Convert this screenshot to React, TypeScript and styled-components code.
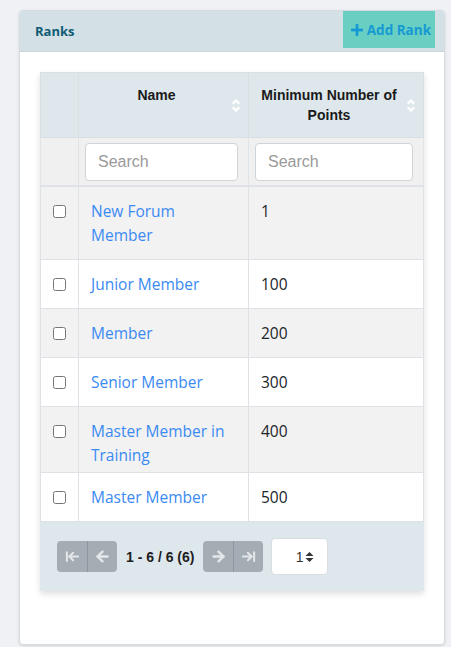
import React from "react";
import styled, { createGlobalStyle } from "styled-components";
import { ArrowLeft, ArrowRight, ArrowLeftToLine, ArrowRightToLine } from "lucide-react";

const GlobalStyle = createGlobalStyle`
  html, body { margin: 0; padding: 0; }
  body {
    background: #eff1f4;
    font-family: "Open Sans", "Noto Sans", sans-serif;
    color: #212529;
  }
  * { box-sizing: border-box; }
`;

const Page = styled.div`
  padding: 10px 6px 4px 19px;
`;

const Card = styled.section`
  width: 426px;
  background: #fff;
  border: 1px solid #d6dce0;
  border-radius: 4px;
  box-shadow: 0 1px 3px rgba(0, 0, 0, 0.12);
  overflow: hidden;
`;

const CardHeader = styled.header`
  display: flex;
  justify-content: space-between;
  align-items: flex-start;
  height: 41px;
  padding: 0 9px 0 15px;
  background: #d3e0e6;
  border-bottom: 1px solid #c9d5db;
`;

const Title = styled.h2`
  margin: 0;
  line-height: 40px;
  font-family: "Open Sans", sans-serif;
  font-size: 13px;
  font-weight: 700;
  color: #0f5c73;
`;

const AddButton = styled.button`
  display: flex;
  align-items: center;
  gap: 4px;
  height: 37px;
  padding: 0 4px 0 8px;
  border: none;
  background: #68cfc2;
  color: #1799d3;
  font-family: "Open Sans", sans-serif;
  font-size: 13.5px;
  font-weight: 700;
  cursor: pointer;
`;

const CardBody = styled.div`
  padding: 20px 20px 53px 20px;
`;

const TableWrap = styled.div`
  box-shadow: 0 3px 6px rgba(0, 0, 0, 0.13);
`;

const Table = styled.table`
  width: 100%;
  border-collapse: collapse;
  table-layout: fixed;
`;

const HeadRow = styled.tr`
  background: #dde7ec;
`;

const Th = styled.th<{ $w?: number }>`
  position: relative;
  width: ${(p) => (p.$w ? `${p.$w}px` : "auto")};
  padding: 12px 26px 12px 12px;
  border: 1px solid #d9e0e4;
  font-family: "Liberation Sans", Arial, sans-serif;
  font-size: 14px;
  font-weight: 700;
  line-height: 20px;
  color: #1a1a1a;
  text-align: center;
  vertical-align: top;
`;

const CornerTh = styled(Th)`
  padding: 0;
`;

const SortIcon = styled.svg`
  position: absolute;
  right: 7px;
  top: 50%;
  margin-top: -7px;
`;

const FilterRow = styled.tr`
  background: #f0f0f0;
`;

const FilterCell = styled.td`
  padding: 5px 10px 4px 6px;
  border: 1px solid #e1e4e7;
  border-bottom: 2px solid #dee2e6;
`;

const SearchInput = styled.input`
  display: block;
  width: 100%;
  height: 38px;
  padding: 6px 12px;
  border: 1px solid #ced4da;
  border-radius: 4px;
  background: #fff;
  font-family: "Liberation Sans", Arial, sans-serif;
  font-size: 16px;
  color: #495057;
  &::placeholder { color: #9a9a9a; }
`;

const Row = styled.tr<{ $striped: boolean; $tight: boolean }>`
  background: ${(p) => (p.$striped ? "#f2f2f2" : "#fff")};
  & > td { padding-bottom: ${(p) => (p.$tight ? "5px" : "12px")}; }
`;

const Td = styled.td`
  padding: 12px;
  border: 1px solid #dee2e6;
  font-size: 15.5px;
  line-height: 24px;
  vertical-align: top;
  color: #212529;
`;

const CheckCell = styled(Td)`
  padding-left: 0;
  padding-right: 0;
`;

const Check = styled.input`
  display: block;
  width: 13px;
  height: 13px;
  margin: 6px auto 5px;
`;

const NameLink = styled.a`
  color: #3a8af2;
  text-decoration: none;
`;

const Footer = styled.div`
  display: flex;
  align-items: center;
  padding: 16px 17px;
  background: #dde7ec;
`;

const BtnGroup = styled.div`
  display: flex;
  border-radius: 4px;
  overflow: hidden;
`;

const PageBtn = styled.button`
  display: flex;
  align-items: center;
  justify-content: center;
  width: 30px;
  height: 31px;
  padding: 0;
  border: none;
  background: #a5adb4;
  color: #e4e7ea;
  & + & { border-left: 1px solid #8e979f; }
`;

const Range = styled.span`
  margin: 0 9px;
  font-family: "Liberation Sans", Arial, sans-serif;
  font-size: 14px;
  font-weight: 700;
  color: #1e1e1e;
`;

const PageSelect = styled.div`
  display: flex;
  align-items: center;
  justify-content: flex-end;
  gap: 2px;
  width: 57px;
  height: 37px;
  margin-left: 8px;
  padding-right: 13px;
  background: #fff;
  border: 1px solid #d7dde1;
  border-radius: 4px;
  font-family: "Liberation Sans", Arial, sans-serif;
  font-size: 14px;
  color: #333;
`;

const SortArrows = () => (
  <SortIcon width="10" height="15" viewBox="0 0 10 15" fill="none">
    <path d="M1.8 5.8 L5 2.4 L8.2 5.8" stroke="#fff" strokeWidth="2.3" />
    <path d="M1.8 9.2 L5 12.6 L8.2 9.2" stroke="#fff" strokeWidth="2.3" />
  </SortIcon>
);

const ranks = [
  { name: "New Forum Member", points: 1 },
  { name: "Junior Member", points: 100 },
  { name: "Member", points: 200 },
  { name: "Senior Member", points: 300 },
  { name: "Master Member in Training", points: 400, tight: true },
  { name: "Master Member", points: 500 },
];

export default function App() {
  return (
    <>
      <GlobalStyle />
      <Page>
        <Card>
          <CardHeader>
            <Title>Ranks</Title>
            <AddButton>
              <svg width="12" height="12" viewBox="0 0 12 12">
                <rect x="4.6" y="0" width="2.8" height="12" fill="#1799d3" />
                <rect x="0" y="4.6" width="12" height="2.8" fill="#1799d3" />
              </svg>
              Add Rank
            </AddButton>
          </CardHeader>
          <CardBody>
            <TableWrap>
              <Table>
                <thead>
                  <HeadRow>
                    <CornerTh $w={38} />
                    <Th $w={170}>
                      Name
                      <SortArrows />
                    </Th>
                    <Th>
                      Minimum Number of Points
                      <SortArrows />
                    </Th>
                  </HeadRow>
                  <FilterRow>
                    <FilterCell />
                    <FilterCell>
                      <SearchInput placeholder="Search" />
                    </FilterCell>
                    <FilterCell>
                      <SearchInput placeholder="Search" />
                    </FilterCell>
                  </FilterRow>
                </thead>
                <tbody>
                  {ranks.map((r, i) => (
                    <Row key={r.name} $striped={i % 2 === 0} $tight={!!r.tight}>
                      <CheckCell>
                        <Check type="checkbox" />
                      </CheckCell>
                      <Td>
                        <NameLink href="#">{r.name}</NameLink>
                      </Td>
                      <Td>{r.points}</Td>
                    </Row>
                  ))}
                </tbody>
              </Table>
              <Footer>
                <BtnGroup>
                  <PageBtn aria-label="First page">
                    <ArrowLeftToLine size={15} strokeWidth={3.2} />
                  </PageBtn>
                  <PageBtn aria-label="Previous page">
                    <ArrowLeft size={17} strokeWidth={3.4} />
                  </PageBtn>
                </BtnGroup>
                <Range>1 - 6 / 6 (6)</Range>
                <BtnGroup>
                  <PageBtn aria-label="Next page">
                    <ArrowRight size={17} strokeWidth={3.4} />
                  </PageBtn>
                  <PageBtn aria-label="Last page">
                    <ArrowRightToLine size={15} strokeWidth={3.2} />
                  </PageBtn>
                </BtnGroup>
                <PageSelect>
                  1
                  <svg width="9" height="12" viewBox="0 0 9 12">
                    <path d="M0.5 5 L4.5 1 L8.5 5 Z" fill="#333" />
                    <path d="M0.5 7 L4.5 11 L8.5 7 Z" fill="#333" />
                  </svg>
                </PageSelect>
              </Footer>
            </TableWrap>
          </CardBody>
        </Card>
      </Page>
    </>
  );
}
